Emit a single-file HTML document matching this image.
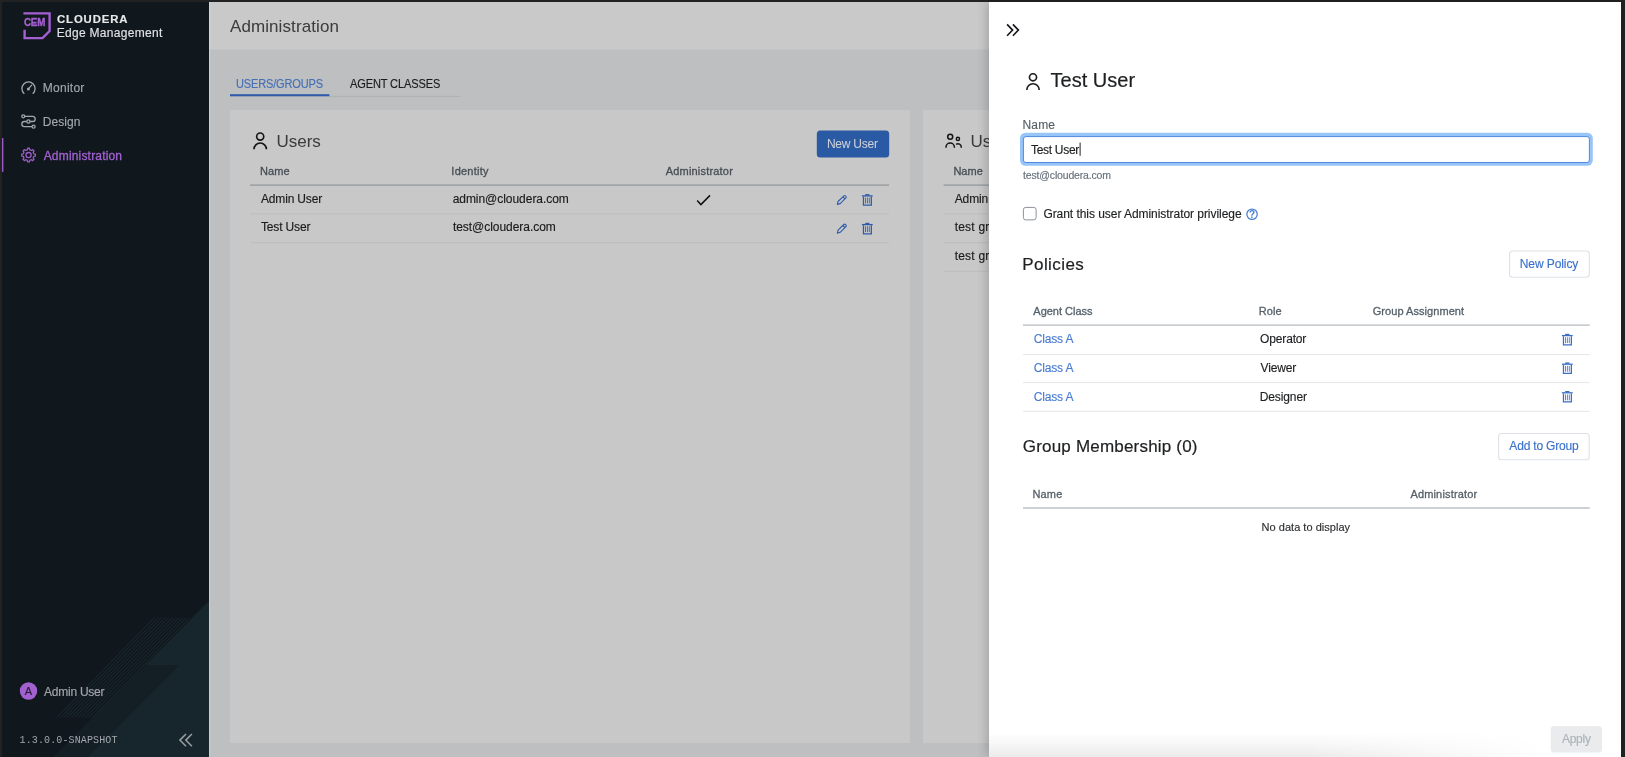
<!DOCTYPE html>
<html lang="en"><head><meta charset="utf-8"><title>Administration - Cloudera Edge Management</title>
<style>
html,body{margin:0;padding:0}
body{width:1625px;height:757px;overflow:hidden;background:#222;font-family:"Liberation Sans",sans-serif;position:relative}
.abs{position:absolute;left:0;top:0}
.t{position:absolute;white-space:nowrap}
.clip{position:absolute;overflow:hidden}
.in{position:absolute;width:1625px;height:757px;will-change:transform}
#side{left:2px;top:2px;width:207px;height:755px;background:#10171d}
#side>.in{left:-2px;top:-2px}
#main{left:209px;top:2px;width:1412px;height:755px;background:#bebfc1}
#main>.in{left:-209px;top:-2px}
#panel{left:989px;top:2px;width:632px;height:755px;background:#fff;box-shadow:-2px 0 10px rgba(0,0,0,.2)}
#panel>.in{left:-989px;top:-2px}
#shade{position:absolute;left:989px;top:732px;width:632px;height:25px;background:linear-gradient(to bottom,rgba(0,0,0,0),rgba(0,0,0,.03) 45%,rgba(0,0,0,.08));-webkit-mask-image:linear-gradient(to right,#000 0,#000 50%,transparent 88%);mask-image:linear-gradient(to right,#000 0,#000 50%,transparent 88%)}
</style></head>
<body>
<nav id="side" class="clip"><div class="in">
<svg class="abs" width="1625" height="757" viewBox="0 0 1625 757">
<polygon points="209,601 53,757 209,757" fill="#131e25"/>
<polygon points="209,601 145.5,665 179.7,665 88,757 209,757" fill="#17262d"/>
<g stroke="#22323a" stroke-width="0.75"><line x1="154.4" y1="617.6" x2="56.9" y2="717.5"/><line x1="158.0" y1="617.6" x2="60.4" y2="717.5"/><line x1="161.5" y1="617.6" x2="64.0" y2="717.5"/><line x1="165.1" y1="617.6" x2="67.5" y2="717.5"/><line x1="168.6" y1="617.6" x2="71.1" y2="717.5"/><line x1="172.2" y1="617.6" x2="74.7" y2="717.5"/><line x1="175.7" y1="617.6" x2="78.2" y2="717.5"/><line x1="179.2" y1="617.6" x2="81.8" y2="717.5"/><line x1="182.8" y1="617.6" x2="85.3" y2="717.5"/><line x1="186.3" y1="617.6" x2="88.8" y2="717.5"/><line x1="189.9" y1="617.6" x2="92.4" y2="717.5"/></g>
<path d="M23.4 13.4 H49.6 V31.1 L42.5 38.1 H24.6 V29.8" fill="none" stroke="#a45fd3" stroke-width="2.4"/>
<g fill="none" stroke="#a4a8ac" stroke-width="1.3" stroke-linecap="round">
<path d="M24.0 93.4 A6.6 6.6 0 1 1 33.0 93.4"/>
<path d="M28.4 88.9 L31.7 85.2" stroke-width="1.2"/>
</g>
<circle cx="28.4" cy="89" r="1.5" fill="#a4a8ac"/>
<g fill="none" stroke="#a4a8ac" stroke-width="1.3">
<circle cx="23.3" cy="116.3" r="1.5"/>
<circle cx="28.4" cy="121.5" r="1.6"/>
<circle cx="33.6" cy="126.7" r="1.5"/>
<path d="M24.9 116.3 H32.6 A2.6 2.6 0 0 1 32.6 121.5 H30.1"/>
<path d="M26.7 121.5 H24.4 A2.6 2.6 0 0 0 24.4 126.7 H32"/>
</g>
<path d="M27.29 149.85 L27.63 148.26 L29.47 148.26 L29.81 149.85 L31.37 150.50 L32.74 149.61 L34.04 150.91 L33.15 152.28 L33.80 153.84 L35.39 154.18 L35.39 156.02 L33.80 156.36 L33.15 157.92 L34.04 159.29 L32.74 160.59 L31.37 159.70 L29.81 160.35 L29.47 161.94 L27.63 161.94 L27.29 160.35 L25.73 159.70 L24.36 160.59 L23.06 159.29 L23.95 157.92 L23.30 156.36 L21.71 156.02 L21.71 154.18 L23.30 153.84 L23.95 152.28 L23.06 150.91 L24.36 149.61 L25.73 150.50Z" fill="none" stroke="#9c5cc8" stroke-width="1.3" stroke-linejoin="round"/><circle cx="28.55" cy="155.1" r="2.6" fill="none" stroke="#9c5cc8" stroke-width="1.3"/>
<rect x="1.9" y="138" width="1.5" height="33.9" fill="#9a5bc6"/>
<circle cx="28.5" cy="691" r="8.7" fill="#a162cf"/>
<path d="M186 734 L179.9 740.1 L186 746.2 M191.9 734 L185.8 740.1 L191.9 746.2" fill="none" stroke="#979ca0" stroke-width="1.55"/>
</svg>
<span class="t" style='left:23.69px;top:15px;font-size:11px;line-height:15px;letter-spacing:-0.228px;color:#a45fd3;font-weight:700;-webkit-text-stroke:0.4px #a45fd3;transform:scaleX(0.89);transform-origin:0 0;'>CEM</span><span class="t" style='left:56.79px;top:12px;font-size:10.5px;line-height:15px;letter-spacing:0.815px;color:#e6e8ea;font-weight:700;-webkit-text-stroke:0.15px #e6e8ea;transform:scaleX(1.08);transform-origin:0 0;'>CLOUDERA</span><span class="t" style='left:56.63px;top:25px;font-size:12px;line-height:16px;letter-spacing:0.306px;color:#e0e2e4;-webkit-text-stroke:0.15px #e0e2e4;'>Edge Management</span><span class="t" style='left:42.84px;top:80px;font-size:12px;line-height:16px;letter-spacing:0.244px;color:#a4a8ac;-webkit-text-stroke:0.15px #a4a8ac;'>Monitor</span><span class="t" style='left:42.84px;top:114px;font-size:12px;line-height:16px;letter-spacing:0.039px;color:#a4a8ac;-webkit-text-stroke:0.15px #a4a8ac;'>Design</span><span class="t" style='left:43.70px;top:148px;font-size:12px;line-height:16px;letter-spacing:0.178px;color:#a362d3;-webkit-text-stroke:0.3px #a362d3;'>Administration</span><span class="t" style='left:24.80px;top:684px;font-size:11px;line-height:15px;letter-spacing:0.065px;color:#2a1838;-webkit-text-stroke:0.15px #2a1838;'>A</span><span class="t" style='left:44.10px;top:684px;font-size:12px;line-height:16px;letter-spacing:-0.256px;color:#a4a8ac;-webkit-text-stroke:0.15px #a4a8ac;'>Admin User</span><span class="t" style='left:19.57px;top:734px;font-size:10px;line-height:14px;letter-spacing:0.123px;color:#a4a8ac;font-family:"Liberation Mono",monospace;'>1.3.0.0-SNAPSHOT</span>
</div></nav>
<main id="main" class="clip"><div class="in">
<svg class="abs" width="1625" height="757" viewBox="0 0 1625 757">
<rect x="209" y="2" width="1412" height="47.5" fill="#c9c9c9"/>
<rect x="230" y="95.9" width="230.6" height="1.0" fill="#afb1b3"/><rect x="230" y="94.2" width="99.4" height="2.0" fill="#2f5bab"/>
<rect x="230" y="110" width="680" height="633" fill="#c8c8c8"/><rect x="923" y="110" width="680" height="633" fill="#c8c8c8"/>
<rect x="250" y="184.42" width="639" height="1.36" fill="#979b9f"/><rect x="250" y="213.3" width="639" height="1.0" fill="#bbbdbf"/><rect x="250" y="242.1" width="639" height="1.0" fill="#bbbdbf"/>
<rect x="943.5" y="184.42" width="639.5" height="1.36" fill="#979b9f"/><rect x="943.5" y="213.3" width="639.5" height="1.0" fill="#bbbdbf"/><rect x="943.5" y="242.1" width="639.5" height="1.0" fill="#bbbdbf"/><rect x="943.5" y="270.8" width="639.5" height="1.0" fill="#bbbdbf"/>
<rect x="816.8" y="130.4" width="72.4" height="27.2" rx="3.5" fill="#2a5aa3"/>
<circle cx="260.2" cy="136.57" r="3.55" fill="none" stroke="#151515" stroke-width="1.65"/><path d="M254.00 149.20 A6.2 6.2 0 0 1 266.40 149.20" fill="none" stroke="#151515" stroke-width="1.65"/>
<g fill="none" stroke="#151515" stroke-width="1.5">
<circle cx="950.2" cy="136.8" r="2.5"/>
<path d="M946 147.8 V147.2 A4.2 4.2 0 0 1 954.4 147.2 V147.8"/>
<circle cx="957.9" cy="138.9" r="1.6"/>
<path d="M956.1 144.3 A3.4 3.4 0 0 1 961.3 147.2 V147.8"/>
</g>
<path d="M697.2 200.6 L700.9 204.6 L710 195.4" fill="none" stroke="#111" stroke-width="1.5"/>
<g transform="translate(836.8,194.9)" fill="none" stroke="#2f5cab" stroke-width="1.1" stroke-linejoin="round"><path d="M0.5 9.5 L1.3 6.6 L7.0 0.9 A1.1 1.1 0 0 1 8.6 0.9 L9.1 1.4 A1.1 1.1 0 0 1 9.1 3.0 L3.4 8.7 Z"/><path d="M6.1 1.9 L8.1 3.9"/></g><g transform="translate(861.7,193.9)" fill="none" stroke="#2f5cab" stroke-width="1.25"><path d="M0.2 2 H11" stroke-width="1.3"/><rect x="3.5" y="0.2" width="4.2" height="1.4" fill="#2f5cab" stroke="none"/><path d="M1.75 2.6 V11.15 H9.65 V2.6"/><path d="M3.8 3.7 V9.5 M5.7 3.7 V9.5 M7.6 3.7 V9.5" stroke-width="0.85"/></g>
<g transform="translate(836.8,223.6)" fill="none" stroke="#2f5cab" stroke-width="1.1" stroke-linejoin="round"><path d="M0.5 9.5 L1.3 6.6 L7.0 0.9 A1.1 1.1 0 0 1 8.6 0.9 L9.1 1.4 A1.1 1.1 0 0 1 9.1 3.0 L3.4 8.7 Z"/><path d="M6.1 1.9 L8.1 3.9"/></g><g transform="translate(861.7,222.6)" fill="none" stroke="#2f5cab" stroke-width="1.25"><path d="M0.2 2 H11" stroke-width="1.3"/><rect x="3.5" y="0.2" width="4.2" height="1.4" fill="#2f5cab" stroke="none"/><path d="M1.75 2.6 V11.15 H9.65 V2.6"/><path d="M3.8 3.7 V9.5 M5.7 3.7 V9.5 M7.6 3.7 V9.5" stroke-width="0.85"/></g>
<rect x="209" y="2" width="1.2" height="755" fill="#fff" fill-opacity=".22"/>
</svg>
<span class="t" style='left:229.95px;top:16px;font-size:17px;line-height:22px;letter-spacing:0.1px;color:#3c3c3c;-webkit-text-stroke:0.01px #3c3c3c;'>Administration</span><span class="t" style='left:235.94px;top:76px;font-size:12px;line-height:16px;letter-spacing:-0.191px;color:#4470b6;-webkit-text-stroke:0.15px #4470b6;transform:scaleX(0.92);transform-origin:0 0;'>USERS/GROUPS</span><span class="t" style='left:350.10px;top:76px;font-size:12px;line-height:16px;letter-spacing:-0.144px;color:#1b1b1b;-webkit-text-stroke:0.15px #1b1b1b;transform:scaleX(0.92);transform-origin:0 0;'>AGENT CLASSES</span><span class="t" style='left:276.46px;top:131px;font-size:17px;line-height:22px;letter-spacing:-0.014px;color:#3c3c3c;-webkit-text-stroke:0.01px #3c3c3c;'>Users</span><span class="t" style='left:826.90px;top:136px;font-size:12px;line-height:16px;letter-spacing:-0.216px;color:#cdd1d8;-webkit-text-stroke:0.05px #cdd1d8;'>New User</span><span class="t" style='left:260.10px;top:164px;font-size:11px;line-height:15px;letter-spacing:0.033px;color:#464e55;-webkit-text-stroke:0.3px #464e55;'>Name</span><span class="t" style='left:451.37px;top:164px;font-size:11px;line-height:15px;letter-spacing:0.237px;color:#464e55;-webkit-text-stroke:0.3px #464e55;'>Identity</span><span class="t" style='left:665.70px;top:164px;font-size:11px;line-height:15px;letter-spacing:0.192px;color:#464e55;-webkit-text-stroke:0.3px #464e55;'>Administrator</span><span class="t" style='left:261.00px;top:191px;font-size:12px;line-height:16px;letter-spacing:-0.167px;color:#1b1b1b;-webkit-text-stroke:0.15px #1b1b1b;'>Admin User</span><span class="t" style='left:452.64px;top:191px;font-size:12px;line-height:16px;letter-spacing:-0.039px;color:#1b1b1b;-webkit-text-stroke:0.15px #1b1b1b;'>admin@cloudera.com</span><span class="t" style='left:260.97px;top:219px;font-size:12px;line-height:16px;letter-spacing:-0.147px;color:#1b1b1b;-webkit-text-stroke:0.15px #1b1b1b;'>Test User</span><span class="t" style='left:452.94px;top:219px;font-size:12px;line-height:16px;letter-spacing:-0.042px;color:#1b1b1b;-webkit-text-stroke:0.15px #1b1b1b;'>test@cloudera.com</span><span class="t" style='left:970.46px;top:131px;font-size:17px;line-height:22px;letter-spacing:-0.02px;color:#3c3c3c;-webkit-text-stroke:0.01px #3c3c3c;'>User Groups</span><span class="t" style='left:953.40px;top:164px;font-size:11px;line-height:15px;letter-spacing:0.033px;color:#464e55;-webkit-text-stroke:0.3px #464e55;'>Name</span><span class="t" style='left:954.70px;top:191px;font-size:12px;line-height:16px;letter-spacing:-0.105px;color:#1b1b1b;-webkit-text-stroke:0.15px #1b1b1b;'>Admin Group</span><span class="t" style='left:954.65px;top:219px;font-size:12px;line-height:16px;letter-spacing:0.214px;color:#1b1b1b;-webkit-text-stroke:0.15px #1b1b1b;'>test group 1</span><span class="t" style='left:954.65px;top:248px;font-size:12px;line-height:16px;letter-spacing:0.214px;color:#1b1b1b;-webkit-text-stroke:0.15px #1b1b1b;'>test group 2</span>
</div></main>
<aside id="panel" class="clip" style="overflow:visible"><div class="clip" style="left:0;top:0;width:632px;height:755px"><div class="in" style="left:-989px;top:-2px">
<div id="shade"></div>
<svg class="abs" width="1625" height="757" viewBox="0 0 1625 757">
<rect x="1023" y="324.53" width="566.7" height="1.15" fill="#adb5bc"/><rect x="1023" y="354.1" width="566.7" height="1.0" fill="#e4e7ea"/><rect x="1023" y="382.1" width="566.7" height="1.0" fill="#e4e7ea"/><rect x="1023" y="410.8" width="566.7" height="1.0" fill="#e4e7ea"/>
<rect x="1023" y="507.1" width="566.7" height="1.8" fill="#c6ccd2"/>
<rect x="1020" y="132.7" width="572.8" height="33.1" rx="5.5" fill="#98c5f7"/>
<rect x="1023.4" y="136.6" width="566" height="25.9" rx="2.5" fill="#fff" stroke="#4f89de" stroke-width="1"/>
<rect x="1079.6" y="142.6" width="1.0" height="13.2" fill="#222"/>
<rect x="1023.4" y="207.4" width="12.7" height="12.5" rx="2.3" fill="#fff" stroke="#8b9299" stroke-width="1"/>
<rect x="1509.6" y="251" width="79.7" height="26.2" rx="3" fill="#fff" stroke="#dde1e6" stroke-width="1.1"/>
<rect x="1498.6" y="433.5" width="90.6" height="26.2" rx="3" fill="#fff" stroke="#dde1e6" stroke-width="1.1"/>
<rect x="1550.7" y="725.9" width="51.3" height="26.7" rx="3.5" fill="#e9ebed"/>
<path d="M1007.1 24.4 L1012.6 30.1 L1007.1 35.8 M1012.9 24.4 L1018.4 30.1 L1012.9 35.8" fill="none" stroke="#15171a" stroke-width="1.65"/>
<circle cx="1033" cy="77.28" r="3.55" fill="none" stroke="#1a1c1e" stroke-width="1.65"/><path d="M1026.80 89.90 A6.2 6.2 0 0 1 1039.20 89.90" fill="none" stroke="#1a1c1e" stroke-width="1.65"/>
<circle cx="1252.05" cy="214.25" r="5.2" fill="none" stroke="#4a80d4" stroke-width="1.3"/>
<text x="1252.1" y="217.7" text-anchor="middle" font-family="Liberation Sans, sans-serif" font-size="10" font-weight="700" fill="#4a80d4">?</text>
<g transform="translate(1561.7,333.6)" fill="none" stroke="#3b6fc6" stroke-width="1.25"><path d="M0.2 2 H11" stroke-width="1.3"/><rect x="3.5" y="0.2" width="4.2" height="1.4" fill="#3b6fc6" stroke="none"/><path d="M1.75 2.6 V11.15 H9.65 V2.6"/><path d="M3.8 3.7 V9.5 M5.7 3.7 V9.5 M7.6 3.7 V9.5" stroke-width="0.85"/></g><g transform="translate(1561.7,362.2)" fill="none" stroke="#3b6fc6" stroke-width="1.25"><path d="M0.2 2 H11" stroke-width="1.3"/><rect x="3.5" y="0.2" width="4.2" height="1.4" fill="#3b6fc6" stroke="none"/><path d="M1.75 2.6 V11.15 H9.65 V2.6"/><path d="M3.8 3.7 V9.5 M5.7 3.7 V9.5 M7.6 3.7 V9.5" stroke-width="0.85"/></g><g transform="translate(1561.7,390.8)" fill="none" stroke="#3b6fc6" stroke-width="1.25"><path d="M0.2 2 H11" stroke-width="1.3"/><rect x="3.5" y="0.2" width="4.2" height="1.4" fill="#3b6fc6" stroke="none"/><path d="M1.75 2.6 V11.15 H9.65 V2.6"/><path d="M3.8 3.7 V9.5 M5.7 3.7 V9.5 M7.6 3.7 V9.5" stroke-width="0.85"/></g>
</svg>
<span class="t" style='left:1050.50px;top:67px;font-size:20px;line-height:26px;letter-spacing:0.013px;color:#1d1f21;-webkit-text-stroke:0.2px #1d1f21;'>Test User</span><span class="t" style='left:1022.53px;top:117px;font-size:12px;line-height:16px;letter-spacing:0.152px;color:#56616a;-webkit-text-stroke:0.15px #56616a;'>Name</span><span class="t" style='left:1031.07px;top:142px;font-size:12px;line-height:16px;letter-spacing:-0.309px;color:#1d1f21;-webkit-text-stroke:0.15px #1d1f21;'>Test User</span><span class="t" style='left:1023.11px;top:168px;font-size:10.5px;line-height:15px;letter-spacing:-0.169px;color:#66707a;-webkit-text-stroke:0.15px #66707a;'>test@cloudera.com</span><span class="t" style='left:1043.38px;top:206px;font-size:12px;line-height:16px;letter-spacing:-0.049px;color:#1d1f21;-webkit-text-stroke:0.15px #1d1f21;'>Grant this user Administrator privilege</span><span class="t" style='left:1022.26px;top:254px;font-size:17px;line-height:22px;letter-spacing:0.42px;color:#1d1f21;-webkit-text-stroke:0.2px #1d1f21;'>Policies</span><span class="t" style='left:1519.73px;top:256px;font-size:12px;line-height:16px;letter-spacing:-0.083px;color:#3b72cc;-webkit-text-stroke:0.15px #3b72cc;'>New Policy</span><span class="t" style='left:1033.30px;top:304px;font-size:11px;line-height:15px;letter-spacing:0.0px;color:#56616a;-webkit-text-stroke:0.3px #56616a;'>Agent Class</span><span class="t" style='left:1258.80px;top:304px;font-size:11px;line-height:15px;letter-spacing:0.045px;color:#56616a;-webkit-text-stroke:0.3px #56616a;'>Role</span><span class="t" style='left:1372.73px;top:304px;font-size:11px;line-height:15px;letter-spacing:0.057px;color:#56616a;-webkit-text-stroke:0.3px #56616a;'>Group Assignment</span><span class="t" style='left:1033.67px;top:331px;font-size:12px;line-height:16px;letter-spacing:-0.159px;color:#4a7dd2;-webkit-text-stroke:0.15px #4a7dd2;'>Class A</span><span class="t" style='left:1260.12px;top:331px;font-size:12px;line-height:16px;letter-spacing:-0.159px;color:#1d1f21;-webkit-text-stroke:0.15px #1d1f21;'>Operator</span><span class="t" style='left:1033.67px;top:360px;font-size:12px;line-height:16px;letter-spacing:-0.159px;color:#4a7dd2;-webkit-text-stroke:0.15px #4a7dd2;'>Class A</span><span class="t" style='left:1260.50px;top:360px;font-size:12px;line-height:16px;letter-spacing:-0.123px;color:#1d1f21;-webkit-text-stroke:0.15px #1d1f21;'>Viewer</span><span class="t" style='left:1033.67px;top:389px;font-size:12px;line-height:16px;letter-spacing:-0.159px;color:#4a7dd2;-webkit-text-stroke:0.15px #4a7dd2;'>Class A</span><span class="t" style='left:1259.63px;top:389px;font-size:12px;line-height:16px;letter-spacing:-0.091px;color:#1d1f21;-webkit-text-stroke:0.15px #1d1f21;'>Designer</span><span class="t" style='left:1022.74px;top:436px;font-size:17px;line-height:22px;letter-spacing:0.198px;color:#1d1f21;-webkit-text-stroke:0.2px #1d1f21;'>Group Membership (0)</span><span class="t" style='left:1509.30px;top:438px;font-size:12px;line-height:16px;letter-spacing:-0.173px;color:#3b72cc;-webkit-text-stroke:0.15px #3b72cc;'>Add to Group</span><span class="t" style='left:1032.40px;top:487px;font-size:11px;line-height:15px;letter-spacing:0.2px;color:#56616a;-webkit-text-stroke:0.3px #56616a;'>Name</span><span class="t" style='left:1410.40px;top:487px;font-size:11px;line-height:15px;letter-spacing:0.167px;color:#56616a;-webkit-text-stroke:0.3px #56616a;'>Administrator</span><span class="t" style='left:1261.59px;top:520px;font-size:11px;line-height:15px;letter-spacing:0.024px;color:#2c2f32;-webkit-text-stroke:0.15px #2c2f32;'>No data to display</span><span class="t" style='left:1561.90px;top:731px;font-size:12px;line-height:16px;letter-spacing:-0.225px;color:#adb3ba;-webkit-text-stroke:0.15px #adb3ba;'>Apply</span>
</div></div></aside>
</body></html>
